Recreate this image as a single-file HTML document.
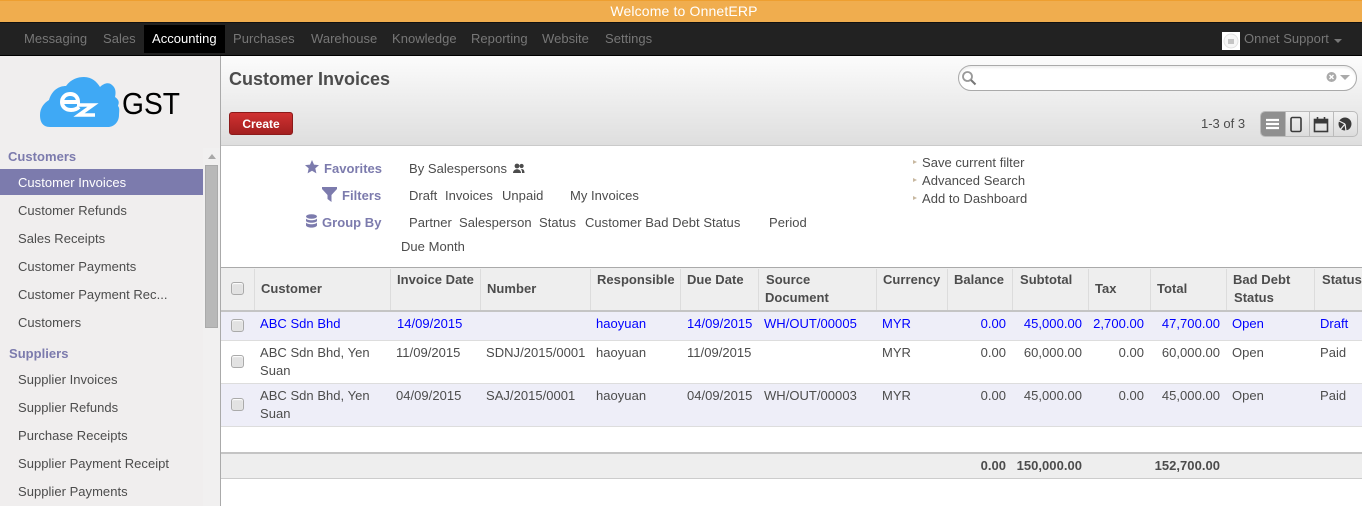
<!DOCTYPE html>
<html><head><meta charset="utf-8"><title>Customer Invoices</title>
<style>
*{box-sizing:border-box}
html,body{margin:0;padding:0;width:1362px;height:506px;overflow:hidden;background:#fff}
body{font-family:"Liberation Sans",Arial,sans-serif;font-size:13px;color:#4c4c4c;position:relative;letter-spacing:.03px}
.a,.t,.r{position:absolute;white-space:nowrap;line-height:18px;height:18px}
.r{text-align:right}
.b{position:absolute}
.n{color:#777;font-size:13px}
.s{color:#4c4c4c;font-size:13px}
.g{color:#7c7bad;font-weight:bold}
.h{font-weight:bold;color:#4c4c4c}
.u{color:#00f}
.cb{position:absolute;width:13px;height:13px;border:1px solid #aaa;border-radius:3px;background:#e2e2e2;box-shadow:inset 0 1px 1px #fff}
.bd{position:absolute;width:1px;top:269px;height:41px;background:#dcdcdc}
</style></head><body>

<div class="b" style="left:0;top:0;width:1362px;height:22px;background:#f0ad4e;border-top:1px solid #ee9f30"></div>
<div class="a" style="left:3px;width:1362px;top:2px;text-align:center;color:#fff;font-size:14px;letter-spacing:.15px">Welcome to OnnetERP</div>

<div class="b" style="left:0;top:22px;width:1362px;height:34px;background:#222;border-top:1px solid #111;border-bottom:1px solid #000"></div>
<div class="b" style="left:144px;top:25px;width:81px;height:28px;background:#000"></div>
<div class="a n" style="left:24px;top:30px">Messaging</div>
<div class="a n" style="left:103px;top:30px">Sales</div>
<div class="a" style="left:152px;top:30px;color:#fff">Accounting</div>
<div class="a n" style="left:233px;top:30px">Purchases</div>
<div class="a n" style="left:311px;top:30px">Warehouse</div>
<div class="a n" style="left:392px;top:30px">Knowledge</div>
<div class="a n" style="left:471px;top:30px">Reporting</div>
<div class="a n" style="left:542px;top:30px">Website</div>
<div class="a n" style="left:605px;top:30px">Settings</div>
<div class="b" style="left:1222px;top:32px;width:18px;height:18px;background:#fff"><svg width="18" height="18" style="display:block"><circle cx="9" cy="9" r="7" fill="#f6f6f6" stroke="#e2e2e2"/><rect x="6" y="7" width="6" height="5" fill="#c4c4c4"/></svg></div>
<div class="a n" style="left:1244px;top:30px">Onnet Support</div>
<div class="b" style="left:1334px;top:39px;border:4px solid transparent;border-top-color:#777;border-bottom:0"></div>

<!-- Sidebar -->
<div class="b" style="left:0;top:56px;width:221px;height:450px;background:#f0eeee;border-right:1px solid #aaa"></div>
<svg class="b" style="left:38px;top:76px" width="145" height="52" viewBox="0 0 145 52">
<path d="M12 51C4 51 2 45 2 39C2 32 6 27 11 24C14 14 21 10 28 10C33 3 40 1 46 1C54 1 59 6 62 11C66 7 71 6 74 9C78 12 78 17 77 21C83 25 80 29 80 30C82 32 81 36 81 39C81 46 76 51 70 51Z" fill="#3fa9f5"/>
<path d="M24 26H40C40 21 37 18 32 18C27 18 24 22 24 26C24 31 28 34 33 34C36 34 39 33 41 31" fill="none" stroke="#fff" stroke-width="4"/>
<path d="M39 29H55L41 39H57" fill="none" stroke="#fff" stroke-width="3.6"/>
<text x="84" y="38" font-family="Liberation Sans,sans-serif" font-size="31" fill="#000" textLength="58" lengthAdjust="spacingAndGlyphs">GST</text>
</svg>

<div class="a g" style="left:8px;top:148px">Customers</div>
<div class="b" style="left:0;top:169px;width:203px;height:26px;background:#7c7bad"></div>
<div class="a" style="left:18px;top:174px;color:#fff">Customer Invoices</div>
<div class="a s" style="left:18px;top:202px">Customer Refunds</div>
<div class="a s" style="left:18px;top:230px">Sales Receipts</div>
<div class="a s" style="left:18px;top:258px">Customer Payments</div>
<div class="a s" style="left:18px;top:286px">Customer Payment Rec...</div>
<div class="a s" style="left:18px;top:314px">Customers</div>
<div class="a g" style="left:9px;top:345px">Suppliers</div>
<div class="a s" style="left:18px;top:371px">Supplier Invoices</div>
<div class="a s" style="left:18px;top:399px">Supplier Refunds</div>
<div class="a s" style="left:18px;top:427px">Purchase Receipts</div>
<div class="a s" style="left:18px;top:455px">Supplier Payment Receipt</div>
<div class="a s" style="left:18px;top:483px">Supplier Payments</div>
<div class="b" style="left:203px;top:148px;width:17px;height:358px;background:#f1f0f0"></div>
<div class="b" style="left:208px;top:154px;border:4px solid transparent;border-bottom:5px solid #a8a8a8;border-top:0"></div>
<div class="b" style="left:205px;top:165px;width:13px;height:163px;background:#b8b8b8;border:1px solid #aaa"></div>

<!-- Header -->
<div class="b" style="left:221px;top:56px;width:1141px;height:90px;background:linear-gradient(#fcfcfc,#dedede);border-bottom:1px solid #cacaca"></div>
<div class="a" style="left:229px;top:69px;font-size:18px;font-weight:bold;letter-spacing:0;height:20px;line-height:20px;color:#4c4c4c">Customer Invoices</div>
<div class="b" style="left:958px;top:65px;width:399px;height:26px;border:1px solid #aaa;border-radius:13px;background:#fff;box-shadow:inset 0 2px 2px #eee"></div>
<svg class="b" style="left:961px;top:70px" width="16" height="16"><circle cx="6.5" cy="6.5" r="4.5" fill="none" stroke="#999" stroke-width="1.8"/><path d="M10 10L14.5 14.5" stroke="#777" stroke-width="2"/></svg>
<svg class="b" style="left:1326px;top:71px" width="11" height="12"><circle cx="5.5" cy="6" r="5" fill="#aaa"/><path d="M3.5 4L7.5 8M7.5 4L3.5 8" stroke="#fff" stroke-width="1.4"/></svg>
<div class="b" style="left:1340px;top:75px;border:5px solid transparent;border-top:5px solid #aaa;border-bottom:0"></div>
<div class="b" style="left:229px;top:112px;width:64px;height:23px;border-radius:3px;background:linear-gradient(#d03232,#a31f1f);border:1px solid #8b1a1a"></div>
<div class="a" style="left:229px;width:64px;text-align:center;top:115px;color:#fff;font-weight:bold;letter-spacing:0;font-size:12px">Create</div>
<div class="a" style="left:1201px;top:115px;letter-spacing:0;color:#4c4c4c;font-size:13px">1-3 of 3</div>
<div class="b" style="left:1260px;top:111px;width:98px;height:26px;border:1px solid #bbb;border-radius:5px;background:linear-gradient(#f2f2f2,#dcdcdc);overflow:hidden">
<div class="b" style="left:0;top:0;width:24px;height:24px;background:#8f8f8f"></div>
<div class="b" style="left:24px;top:0;width:1px;height:24px;background:#bbb"></div>
<div class="b" style="left:48px;top:0;width:1px;height:24px;background:#bbb"></div>
<div class="b" style="left:72px;top:0;width:1px;height:24px;background:#bbb"></div>
</div>
<svg class="b" style="left:1260px;top:111px" width="98" height="26">
<path d="M6 9H19M6 13H19M6 17H19" stroke="#fff" stroke-width="2.2"/>
<rect x="31" y="6.5" width="10" height="14" rx="1.5" fill="none" stroke="#3a3a3a" stroke-width="1.6"/>
<rect x="54.5" y="8.5" width="13" height="12" fill="none" stroke="#3a3a3a" stroke-width="1.6"/>
<path d="M54 9H68V12.5H54Z" fill="#3a3a3a"/><path d="M57.5 6V9M64.5 6V9" stroke="#3a3a3a" stroke-width="1.6"/>
<circle cx="85" cy="13" r="6.5" fill="#3a3a3a"/><path d="M85 13L80 19M85 13L86 20M85 13L79 10" stroke="#eee" stroke-width="1.2"/>
</svg>

<!-- Search drawer -->
<svg class="b" style="left:305px;top:160px" width="15" height="14"><path d="M7 0L9 4.6L14 5.1L10.3 8.4L11.4 13.4L7 10.8L2.6 13.4L3.7 8.4L0 5.1L5 4.6Z" fill="#7c7bad"/></svg>
<div class="a g" style="left:324px;top:160px">Favorites</div>
<svg class="b" style="left:322px;top:187px" width="15" height="15"><path d="M0 0H15V2L9.5 8V15L5.5 12V8L0 2Z" fill="#7c7bad"/></svg>
<div class="a g" style="left:342px;top:187px">Filters</div>
<svg class="b" style="left:305px;top:214px" width="13" height="15"><g fill="#7c7bad"><ellipse cx="6.5" cy="2.5" rx="5.5" ry="2.3"/><path d="M1 4.5C2 6.8 11 6.8 12 4.5V7C11 9.3 2 9.3 1 7Z"/><path d="M1 8.5C2 10.8 11 10.8 12 8.5V11.5C11 14.3 2 14.3 1 11.5Z"/></g></svg>
<div class="a g" style="left:322px;top:214px">Group By</div>
<div class="a" style="left:409px;top:160px">By Salespersons</div>
<svg class="b" style="left:513px;top:163px" width="12" height="11"><g fill="#4c4c4c"><circle cx="4" cy="3" r="2.4"/><path d="M0 10C0 5 8 5 8 10Z"/><circle cx="8.6" cy="3" r="2.1"/><path d="M8.5 6C11 6 11.5 8 11.5 10H9C9 8 8.8 7 8 6.3Z"/></g></svg>
<div class="a" style="left:409px;top:187px">Draft</div>
<div class="a" style="left:445px;top:187px">Invoices</div>
<div class="a" style="left:502px;top:187px">Unpaid</div>
<div class="a" style="left:570px;top:187px">My Invoices</div>
<div class="a" style="left:409px;top:214px">Partner</div>
<div class="a" style="left:459px;top:214px">Salesperson</div>
<div class="a" style="left:539px;top:214px">Status</div>
<div class="a" style="left:585px;top:214px">Customer Bad Debt Status</div>
<div class="a" style="left:769px;top:214px">Period</div>
<div class="a" style="left:401px;top:238px">Due Month</div>
<div class="b" style="left:913px;top:160px;border:2.5px solid transparent;border-left:4px solid #c8b8a0;border-right:0"></div>
<div class="b" style="left:913px;top:178px;border:2.5px solid transparent;border-left:4px solid #c8b8a0;border-right:0"></div>
<div class="b" style="left:913px;top:196px;border:2.5px solid transparent;border-left:4px solid #c8b8a0;border-right:0"></div>
<div class="a" style="left:922px;top:154px">Save current filter</div>
<div class="a" style="left:922px;top:172px">Advanced Search</div>
<div class="a" style="left:922px;top:190px">Add to Dashboard</div>

<!-- Table header -->
<div class="b" style="left:221px;top:267px;width:1141px;height:45px;background:#eee;border-top:1px solid #aaa;border-bottom:2px solid #c4c4c4"></div>
<div class="bd" style="left:254px"></div><div class="bd" style="left:390px"></div><div class="bd" style="left:480px"></div><div class="bd" style="left:590px"></div><div class="bd" style="left:680px"></div><div class="bd" style="left:758px"></div><div class="bd" style="left:876px"></div><div class="bd" style="left:947px"></div><div class="bd" style="left:1012px"></div><div class="bd" style="left:1088px"></div><div class="bd" style="left:1150px"></div><div class="bd" style="left:1226px"></div><div class="bd" style="left:1314px"></div>
<div class="cb" style="left:231px;top:282px"></div>
<div class="a h" style="left:261px;top:280px">Customer</div>
<div class="a h" style="left:397px;top:271px">Invoice Date</div>
<div class="a h" style="left:487px;top:280px">Number</div>
<div class="a h" style="left:597px;top:271px">Responsible</div>
<div class="a h" style="left:687px;top:271px">Due Date</div>
<div class="a h" style="left:766px;top:271px">Source</div>
<div class="a h" style="left:765px;top:289px">Document</div>
<div class="a h" style="left:883px;top:271px">Currency</div>
<div class="a h" style="left:954px;top:271px">Balance</div>
<div class="a h" style="left:1020px;top:271px">Subtotal</div>
<div class="a h" style="left:1095px;top:280px">Tax</div>
<div class="a h" style="left:1157px;top:280px">Total</div>
<div class="a h" style="left:1233px;top:271px">Bad Debt</div>
<div class="a h" style="left:1234px;top:289px">Status</div>
<div class="a h" style="left:1322px;top:271px">Status</div>

<!-- Rows -->
<div class="b" style="left:221px;top:312px;width:1141px;height:29px;background:#eeeef8;border-bottom:1px solid #ddd"></div>
<div class="b" style="left:221px;top:341px;width:1141px;height:43px;background:#fff;border-bottom:1px solid #ddd"></div>
<div class="b" style="left:221px;top:384px;width:1141px;height:43px;background:#eeeef8;border-bottom:1px solid #ddd"></div>

<div class="cb" style="left:231px;top:319px"></div>
<div class="a u" style="left:260px;top:315px">ABC Sdn Bhd</div>
<div class="a u" style="left:397px;top:315px">14/09/2015</div>
<div class="a u" style="left:596px;top:315px">haoyuan</div>
<div class="a u" style="left:687px;top:315px">14/09/2015</div>
<div class="a u" style="left:764px;top:315px">WH/OUT/00005</div>
<div class="a u" style="left:882px;top:315px">MYR</div>
<div class="r u" style="right:356px;top:315px">0.00</div>
<div class="r u" style="right:280px;top:315px">45,000.00</div>
<div class="r u" style="right:218px;top:315px">2,700.00</div>
<div class="r u" style="right:142px;top:315px">47,700.00</div>
<div class="a u" style="left:1232px;top:315px">Open</div>
<div class="a u" style="left:1320px;top:315px">Draft</div>

<div class="cb" style="left:231px;top:355px"></div>
<div class="a" style="left:260px;top:344px">ABC Sdn Bhd, Yen</div>
<div class="a" style="left:260px;top:362px">Suan</div>
<div class="a" style="left:396px;top:344px">11/09/2015</div>
<div class="a" style="left:486px;top:344px">SDNJ/2015/0001</div>
<div class="a" style="left:596px;top:344px">haoyuan</div>
<div class="a" style="left:687px;top:344px">11/09/2015</div>
<div class="a" style="left:882px;top:344px">MYR</div>
<div class="r" style="right:356px;top:344px">0.00</div>
<div class="r" style="right:280px;top:344px">60,000.00</div>
<div class="r" style="right:218px;top:344px">0.00</div>
<div class="r" style="right:142px;top:344px">60,000.00</div>
<div class="a" style="left:1232px;top:344px">Open</div>
<div class="a" style="left:1320px;top:344px">Paid</div>

<div class="cb" style="left:231px;top:398px"></div>
<div class="a" style="left:260px;top:387px">ABC Sdn Bhd, Yen</div>
<div class="a" style="left:260px;top:405px">Suan</div>
<div class="a" style="left:396px;top:387px">04/09/2015</div>
<div class="a" style="left:486px;top:387px">SAJ/2015/0001</div>
<div class="a" style="left:596px;top:387px">haoyuan</div>
<div class="a" style="left:687px;top:387px">04/09/2015</div>
<div class="a" style="left:764px;top:387px">WH/OUT/00003</div>
<div class="a" style="left:882px;top:387px">MYR</div>
<div class="r" style="right:356px;top:387px">0.00</div>
<div class="r" style="right:280px;top:387px">45,000.00</div>
<div class="r" style="right:218px;top:387px">0.00</div>
<div class="r" style="right:142px;top:387px">45,000.00</div>
<div class="a" style="left:1232px;top:387px">Open</div>
<div class="a" style="left:1320px;top:387px">Paid</div>

<!-- Footer -->
<div class="b" style="left:221px;top:452px;width:1141px;height:27px;background:#eee;border-top:2px solid #c4c4c4;border-bottom:1px solid #ccc"></div>
<div class="r h" style="right:356px;top:457px">0.00</div>
<div class="r h" style="right:280px;top:457px">150,000.00</div>
<div class="r h" style="right:142px;top:457px">152,700.00</div>
</body></html>
